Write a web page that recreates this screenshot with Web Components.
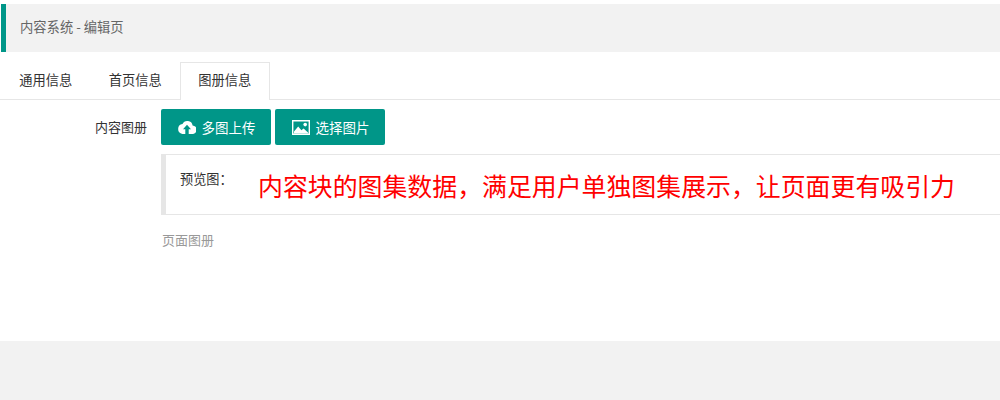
<!DOCTYPE html>
<html lang="zh">
<head>
<meta charset="utf-8">
<title>内容系统 - 编辑页</title>
<style>
  html, body { margin: 0; padding: 0; background: #f2f2f2; }
  body { font: 14px "Microsoft YaHei", "Noto Sans CJK SC", "Liberation Sans", sans-serif; color: #333; }
</style>
</head>
<body>
<edit-page>
  <page-quote slot="head">内容系统 - 编辑页</page-quote>
  <tab-bar slot="tabs">
    <tab-item>通用信息</tab-item>
    <tab-item>首页信息</tab-item>
    <tab-item active>图册信息</tab-item>
  </tab-bar>
  <form-row slot="form" label="内容图册">
    <div style="display:flex;gap:4px">
      <green-btn icon="upload">多图上传</green-btn>
      <green-btn icon="image">选择图片</green-btn>
    </div>
    <preview-box>内容块的图集数据，满足用户单独图集展示，让页面更有吸引力</preview-box>
    <div style="margin-top:15px;height:20px;line-height:20px;color:#999;font-size:13px;padding-left:1px">页面图册</div>
  </form-row>
</edit-page>

<script>
class EditPage extends HTMLElement {
  constructor() {
    super();
    this.attachShadow({ mode: "open" });
    this.shadowRoot.innerHTML = `
      <style>
        :host { display: block; padding-top: 4px; background: #fff; }
        .card { background: #fff; height: 289px; }
        .footer { height: 59px; background: #f2f2f2; }
      </style>
      <slot name="head"></slot>
      <div class="card">
        <slot name="tabs"></slot>
        <slot name="form"></slot>
      </div>
      <div class="footer"></div>
    `;
  }
}

class PageQuote extends HTMLElement {
  constructor() {
    super();
    this.attachShadow({ mode: "open" });
    this.shadowRoot.innerHTML = `
      <style>
        :host {
          display: block;
          box-sizing: border-box;
          height: 48px;
          margin-left: 1px;
          padding-left: 14px;
          line-height: 45px;
          font-size: 13.3px;
          color: #666;
          background: #f2f2f2;
          border-left: 5px solid #009688;
        }
      </style>
      <slot></slot>
    `;
  }
}

class TabBar extends HTMLElement {
  constructor() {
    super();
    this.attachShadow({ mode: "open" });
    this.shadowRoot.innerHTML = `
      <style>
        :host {
          display: flex;
          box-sizing: border-box;
          height: 48px;
          padding: 10px 0 0 1px;
          border-bottom: 1px solid #e6e6e6;
        }
      </style>
      <slot></slot>
    `;
  }
}

class TabItem extends HTMLElement {
  constructor() {
    super();
    this.attachShadow({ mode: "open" });
    this.shadowRoot.innerHTML = `
      <style>
        :host {
          display: block;
          box-sizing: border-box;
          width: 89.5px;
          height: 38px;
          text-align: center;
          line-height: 34px;
          font-size: 13.3px;
          color: #333;
          border: 1px solid transparent;
          border-bottom: 0;
        }
        :host([active]) {
          height: 38px;
          background: #fff;
          border-color: #e6e6e6;
        }
      </style>
      <slot></slot>
    `;
  }
}

class FormRow extends HTMLElement {
  constructor() {
    super();
    this.attachShadow({ mode: "open" });
    this.shadowRoot.innerHTML = `
      <style>
        :host { display: flex; padding-top: 9px; }
        .label {
          box-sizing: border-box;
          width: 161px;
          padding-right: 14px;
          text-align: right;
          line-height: 35px;
          font-size: 13px;
          color: #333;
        }
        .body { flex: 1; min-width: 0; }
      </style>
      <div class="label"></div>
      <div class="body"><slot></slot></div>
    `;
  }
  connectedCallback() {
    this.shadowRoot.querySelector(".label").textContent = this.getAttribute("label");
  }
}

const ICONS = {
  upload: `<svg width="18" height="14" viewBox="0 0 18 14"><path fill="#fff" d="M14.6 5.4A5.3 5.3 0 0 0 4.5 4.1 5 5 0 0 0 4.4 14H7.3V9.2H5L9 4.8l4 4.4h-2.3V14H14a4.3 4.3 0 0 0 .6-8.6z"/></svg>`,
  image: `<svg width="18" height="15" viewBox="0 0 18 15"><path fill="#fff" fill-rule="evenodd" d="M0 0h18v15H0zM1.4 1.4v12.2h15.2V1.4z"/><circle fill="#fff" cx="13.2" cy="4.6" r="1.8"/><path fill="#fff" d="M2 13.6V11.6L6.2 6.6l3.2 3.6 2.2-1.8 4.4 4.2v1z"/></svg>`
};

class GreenBtn extends HTMLElement {
  constructor() {
    super();
    this.attachShadow({ mode: "open" });
    this.shadowRoot.innerHTML = `
      <style>
        :host {
          display: inline-flex;
          box-sizing: border-box;
          align-items: center;
          justify-content: center;
          gap: 6px;
          width: 110px;
          height: 36px;
          padding-left: 1px;
          font-size: 13.5px;
          color: #fff;
          background: #009688;
          border-radius: 2px;
        }
        .ico { display: flex; }
      </style>
      <span class="ico"></span><slot></slot>
    `;
  }
  connectedCallback() {
    this.shadowRoot.querySelector(".ico").innerHTML = ICONS[this.getAttribute("icon")];
  }
}

class PreviewBox extends HTMLElement {
  constructor() {
    super();
    this.attachShadow({ mode: "open" });
    this.shadowRoot.innerHTML = `
      <style>
        :host {
          display: flex;
          box-sizing: border-box;
          height: 61px;
          margin-top: 9px;
          padding-left: 14px;
          background: #fff;
          border: 1px solid #e6e6e6;
          border-left: 5px solid #e6e6e6;
          border-right: 0;
        }
        .tit { width: 78px; padding-top: 14px; line-height: 20px; font-size: 13.2px; color: #333; }
        .note { padding-top: 12px; line-height: 36px; font-size: 24.9px; color: #ff0000; white-space: nowrap; }
      </style>
      <div class="tit">预览图：</div>
      <div class="note"><slot></slot></div>
    `;
  }
}

customElements.define("edit-page", EditPage);
customElements.define("page-quote", PageQuote);
customElements.define("tab-bar", TabBar);
customElements.define("tab-item", TabItem);
customElements.define("form-row", FormRow);
customElements.define("green-btn", GreenBtn);
customElements.define("preview-box", PreviewBox);
</script>
</body>
</html>
